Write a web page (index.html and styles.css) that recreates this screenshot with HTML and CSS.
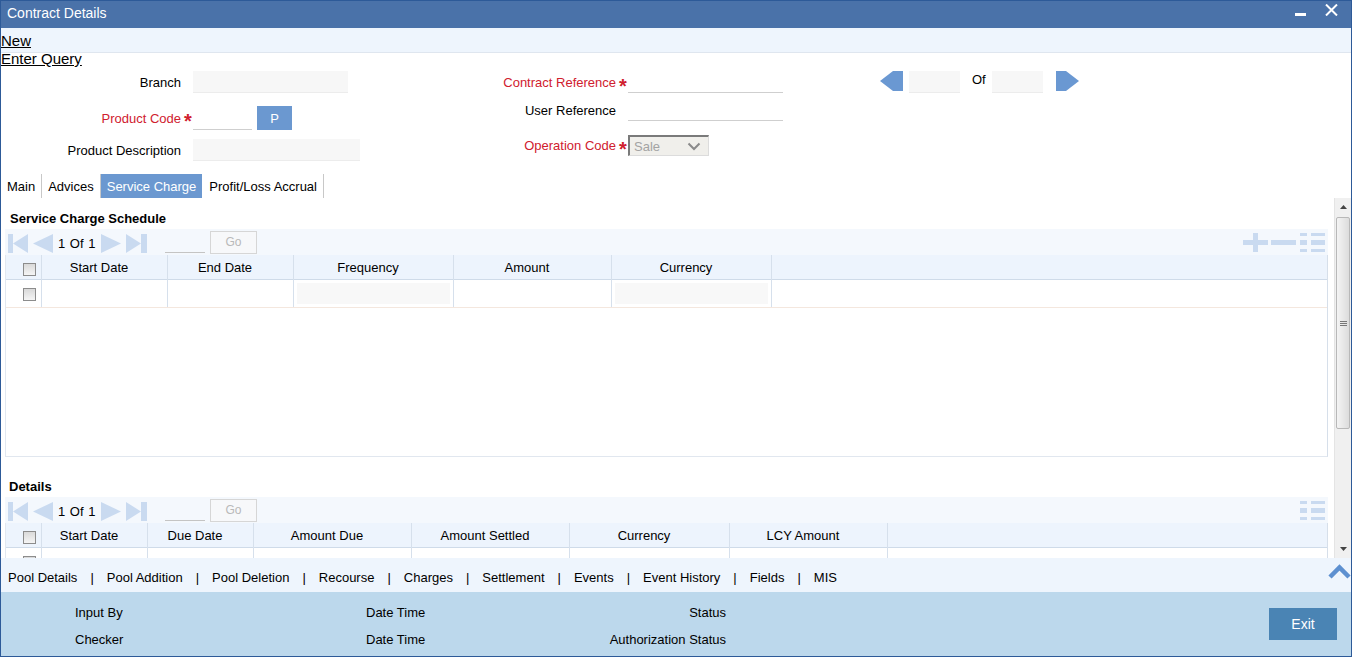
FILE: index.html
```html
<!DOCTYPE html>
<html lang="en">
<head>
<meta charset="utf-8">
<title>Contract Details</title>
<link rel="stylesheet" href="styles.css">
</head>
<body>
<div class="window">
  <header class="titlebar">
    <span class="title">Contract Details</span>
    <div class="win-ctrls">
      <svg class="ic-min" width="11" height="3" viewBox="0 0 11 3"><rect width="11" height="3" fill="#fff"/></svg>
      <svg class="ic-close" width="13" height="12" viewBox="0 0 13 12"><path d="M1 0.5 L12 11.5 M12 0.5 L1 11.5" stroke="#fff" stroke-width="2"/></svg>
    </div>
  </header>

  <nav class="actions">
    <div class="action-strip"><a href="#" class="act">New</a></div>
    <a href="#" class="act query">Enter Query</a>
  </nav>

  <section class="form">
    <div class="fcol col1">
      <div class="field">
        <label class="lbl">Branch</label><span class="req"></span>
        <span class="inp inp-fill w155"></span>
      </div>
      <div class="field h24 mt13">
        <label class="lbl mand">Product Code</label><span class="req">*</span>
        <span class="inp inp-line w59"></span>
        <button class="pbtn" type="button">P</button>
      </div>
      <div class="field mt9">
        <label class="lbl">Product Description</label><span class="req"></span>
        <span class="inp inp-fill w167"></span>
      </div>
    </div>

    <div class="fcol col2">
      <div class="field">
        <label class="lbl mand">Contract Reference</label><span class="req">*</span>
        <span class="inp inp-line w155"></span>
      </div>
      <div class="field mt6">
        <label class="lbl">User Reference</label><span class="req"></span>
        <span class="inp inp-line w155"></span>
      </div>
      <div class="field mt13">
        <label class="lbl mand">Operation Code</label><span class="req">*</span>
        <div class="select">
          <span class="sel-text">Sale</span>
          <svg width="14" height="9" viewBox="0 0 14 9"><path d="M1.5 1.5 L7 7 L12.5 1.5" fill="none" stroke="#8a8a8a" stroke-width="2"/></svg>
        </div>
      </div>
    </div>

    <div class="fcol col3">
      <div class="field recnav">
        <svg class="nav-arrow" width="23" height="20" viewBox="0 0 23 20"><polygon points="0,10 13,0 23,0 23,20 13,20" fill="#6a98d2"/></svg>
        <span class="inp inp-fill w51 navinp"></span>
        <span class="of">Of</span>
        <span class="inp inp-fill w51 navinp2"></span>
        <svg class="nav-arrow nav-next" width="23" height="20" viewBox="0 0 23 20"><polygon points="0,0 10,0 23,10 10,20 0,20" fill="#6a98d2"/></svg>
      </div>
    </div>
  </section>

  <div class="tabs">
    <span class="tab">Main</span>
    <span class="tab">Advices</span>
    <span class="tab active">Service Charge</span>
    <span class="tab">Profit/Loss Accrual</span>
  </div>

  <div class="tabbody">
    <div class="scroll-area">
      <h3 class="sec-title sec-first">Service Charge Schedule</h3>
      <div class="grid">
        <div class="g-toolbar">
          <svg class="pg" width="20" height="19" viewBox="0 0 20 19"><rect x="0" y="0" width="5" height="19" fill="#c9daf0"/><polygon points="5,9.5 20,0 20,19" fill="#c9daf0"/></svg>
          <svg class="pg" width="20" height="19" viewBox="0 0 20 19"><polygon points="0,9.5 20,0 20,19" fill="#c9daf0"/></svg>
          <span class="pg-text">1 Of 1</span>
          <svg class="pg" width="20" height="19" viewBox="0 0 20 19"><polygon points="0,0 20,9.5 0,19" fill="#c9daf0"/></svg>
          <svg class="pg" width="21" height="19" viewBox="0 0 21 19"><polygon points="0,0 15,9.5 0,19" fill="#c9daf0"/><rect x="15" y="0" width="6" height="19" fill="#c9daf0"/></svg>
          <span class="pg-inp"></span>
          <button class="go" type="button">Go</button>
          <div class="g-tools">
            <svg width="25" height="19" viewBox="0 0 25 19"><rect x="0" y="7" width="25" height="5" fill="#c9daf0"/><rect x="10" y="0" width="5" height="19" fill="#c9daf0"/></svg>
            <svg class="t-minus" width="25" height="19" viewBox="0 0 25 19"><rect x="0" y="7" width="25" height="5" fill="#c9daf0"/></svg>
            <svg class="t-list" width="25" height="19" viewBox="0 0 25 19"><rect x="0" y="0" width="7" height="3" fill="#c9daf0"/><rect x="11" y="0" width="14" height="3" fill="#c9daf0"/><rect x="0" y="7" width="7" height="5" fill="#c9daf0"/><rect x="11" y="7" width="14" height="5" fill="#c9daf0"/><rect x="0" y="16" width="7" height="3" fill="#c9daf0"/><rect x="11" y="16" width="14" height="3" fill="#c9daf0"/></svg>
          </div>
        </div>
        <div class="grid-body gb1">
          <div class="g-row g-head cols1">
            <div class="c c-cb"><span class="cb"></span></div>
            <div class="c">Start Date</div>
            <div class="c">End Date</div>
            <div class="c">Frequency</div>
            <div class="c">Amount</div>
            <div class="c">Currency</div>
            <div class="c c-last"></div>
          </div>
          <div class="g-row g-data cols1">
            <div class="c c-cb"><span class="cb"></span></div>
            <div class="c"></div>
            <div class="c"></div>
            <div class="c c-fill"><span class="cell-inp"></span></div>
            <div class="c"></div>
            <div class="c c-fill"><span class="cell-inp"></span></div>
            <div class="c c-last"></div>
          </div>
        </div>
      </div>

      <h3 class="sec-title sec-second">Details</h3>
      <div class="grid">
        <div class="g-toolbar">
          <svg class="pg" width="20" height="19" viewBox="0 0 20 19"><rect x="0" y="0" width="5" height="19" fill="#c9daf0"/><polygon points="5,9.5 20,0 20,19" fill="#c9daf0"/></svg>
          <svg class="pg" width="20" height="19" viewBox="0 0 20 19"><polygon points="0,9.5 20,0 20,19" fill="#c9daf0"/></svg>
          <span class="pg-text">1 Of 1</span>
          <svg class="pg" width="20" height="19" viewBox="0 0 20 19"><polygon points="0,0 20,9.5 0,19" fill="#c9daf0"/></svg>
          <svg class="pg" width="21" height="19" viewBox="0 0 21 19"><polygon points="0,0 15,9.5 0,19" fill="#c9daf0"/><rect x="15" y="0" width="6" height="19" fill="#c9daf0"/></svg>
          <span class="pg-inp"></span>
          <button class="go" type="button">Go</button>
          <div class="g-tools">
            <svg class="t-list" width="25" height="19" viewBox="0 0 25 19"><rect x="0" y="0" width="7" height="3" fill="#c9daf0"/><rect x="11" y="0" width="14" height="3" fill="#c9daf0"/><rect x="0" y="7" width="7" height="5" fill="#c9daf0"/><rect x="11" y="7" width="14" height="5" fill="#c9daf0"/><rect x="0" y="16" width="7" height="3" fill="#c9daf0"/><rect x="11" y="16" width="14" height="3" fill="#c9daf0"/></svg>
          </div>
        </div>
        <div class="grid-body gb2">
          <div class="g-row g-head cols2">
            <div class="c c-cb"><span class="cb"></span></div>
            <div class="c">Start Date</div>
            <div class="c">Due Date</div>
            <div class="c">Amount Due</div>
            <div class="c">Amount Settled</div>
            <div class="c">Currency</div>
            <div class="c">LCY Amount</div>
            <div class="c c-last"></div>
          </div>
          <div class="g-row g-data cols2">
            <div class="c c-cb"><span class="cb"></span></div>
            <div class="c"></div>
            <div class="c"></div>
            <div class="c"></div>
            <div class="c"></div>
            <div class="c"></div>
            <div class="c"></div>
            <div class="c c-last"></div>
          </div>
        </div>
      </div>
    </div>

    <div class="vscroll">
      <div class="sb-btn"><svg width="7" height="4" viewBox="0 0 7 4"><polygon points="0,4 3.5,0 7,4" fill="#444"/></svg></div>
      <div class="sb-thumb"><svg width="7" height="5" viewBox="0 0 7 5"><rect y="0" width="7" height="1" fill="#777"/><rect y="2" width="7" height="1" fill="#777"/><rect y="4" width="7" height="1" fill="#777"/></svg></div>
      <div class="sb-track"></div>
      <div class="sb-btn"><svg width="7" height="4" viewBox="0 0 7 4"><polygon points="0,0 7,0 3.5,4" fill="#444"/></svg></div>
    </div>
  </div>

  <div class="links">
    <a href="#">Pool Details</a><span class="sep">|</span>
    <a href="#">Pool Addition</a><span class="sep">|</span>
    <a href="#">Pool Deletion</a><span class="sep">|</span>
    <a href="#">Recourse</a><span class="sep">|</span>
    <a href="#">Charges</a><span class="sep">|</span>
    <a href="#">Settlement</a><span class="sep">|</span>
    <a href="#">Events</a><span class="sep">|</span>
    <a href="#">Event History</a><span class="sep">|</span>
    <a href="#">Fields</a><span class="sep">|</span>
    <a href="#">MIS</a>
    <svg class="caret" width="23" height="15" viewBox="0 0 23 15"><polyline points="2,13 11.5,3.5 21,13" fill="none" stroke="#5d90d0" stroke-width="4.5"/></svg>
  </div>

  <footer class="audit">
    <div class="audit-grid">
      <span>Input By</span><span>Date Time</span><span class="r">Status</span>
      <span>Checker</span><span>Date Time</span><span class="r">Authorization Status</span>
    </div>
    <button class="exit" type="button">Exit</button>
  </footer>
</div>
</body>
</html>
```

FILE: styles.css
```css
* { box-sizing: border-box; }
html, body { margin: 0; padding: 0; }
body {
  width: 1352px;
  height: 657px;
  overflow: hidden;
  background: #fff;
  color: #000;
  font-family: "Liberation Sans", Arial, sans-serif;
  font-size: 13px;
}
.window {
  width: 1352px;
  height: 657px;
  border: 1px solid #2d5a98;
  display: flex;
  flex-direction: column;
  overflow: hidden;
}

/* title bar */
.titlebar {
  flex: none;
  height: 27px;
  background: #4a72a9;
  color: #fff;
  display: flex;
  justify-content: space-between;
}
.title { font-size: 14px; line-height: 25px; padding-left: 6px; }
.win-ctrls { display: flex; align-items: flex-start; padding-right: 13px; }
.ic-min { margin-top: 12px; margin-right: 19px; }
.ic-close { margin-top: 3px; }

/* actions */
.actions { flex: none; font-size: 15px; }
.action-strip {
  height: 25px;
  background: #eef5fd;
  border-bottom: 1px solid #dfe6ef;
  padding-top: 4px;
}
.act {
  display: block;
  width: max-content;
  color: #000;
  text-decoration: underline;
  line-height: 18px;
}
.query { margin-top: -3px; }

/* form */
.form { flex: none; display: flex; padding-bottom: 13px; }
.fcol { display: flex; flex-direction: column; padding-top: 3px; }
.col1 { width: 399px; }
.col2 { width: 480px; }
.field { display: flex; align-items: center; height: 22px; }
.h24 { height: 24px; }
.mt6 { margin-top: 6px; }
.mt9 { margin-top: 9px; }
.mt13 { margin-top: 13px; }
.lbl { text-align: right; white-space: nowrap; }
.col1 .lbl { width: 180px; }
.col2 .lbl { width: 216px; }
.lbl.mand { color: #d0202e; }
.req {
  width: 12px;
  padding-left: 3px;
  align-self: flex-start;
  margin-top: 5px;
  color: #d0202e;
  font-size: 20px;
  font-weight: bold;
  line-height: 20px;
}
.inp { display: block; height: 22px; }
.inp-fill { background: #f7f7f7; border-bottom: 1px solid #ececec; }
.inp-line { background: #fff; border-bottom: 1px solid #cfcfcf; }
.w51 { width: 51px; }
.w59 { width: 59px; height: 23px; }
.w155 { width: 155px; }
.w167 { width: 167px; }
.pbtn {
  margin-left: 5px;
  width: 35px;
  height: 24px;
  border: none;
  padding: 0;
  background: #6b98d0;
  color: #fff;
  font-family: inherit;
  font-size: 13px;
}
.select {
  width: 81px;
  height: 21px;
  margin-top: 1px;
  display: flex;
  align-items: center;
  justify-content: space-between;
  padding: 0 7px 0 4px;
  background: #f0efeb;
  border-style: solid;
  border-width: 2px 1px 1px 2px;
  border-color: #7a7a7a #dcdcdc #dcdcdc #7a7a7a;
}
.sel-text { color: #a3a3a3; font-size: 13px; }

.recnav { align-items: flex-start; }
.nav-arrow { display: block; }
.navinp { margin-left: 6px; }
.of { margin-left: 12px; line-height: 18px; width: 20px; }
.navinp2 { margin-left: 0; }
.nav-next { margin-left: 13px; }

/* tabs */
.tabs { flex: none; display: flex; height: 24px; line-height: 25px; }
.tab { padding: 0 6px; border-right: 1px solid #c8c8c8; white-space: nowrap; }
.tab.active { background: #6b98d0; color: #fff; border-right-color: #fff; }

/* tab body */
.tabbody { flex: none; height: 360px; display: flex; }
.scroll-area { flex: 1; overflow: hidden; padding: 0 6px 0 4px; }
.sec-title { margin: 0; font-size: 13px; font-weight: bold; line-height: 21px; }
.sec-first { padding: 10px 0 0 5px; }
.sec-second { margin-top: 19px; padding-left: 4px; }

.g-toolbar {
  height: 26px;
  background: #f4f8fd;
  display: flex;
  align-items: center;
  padding: 0 3px;
}
.pg { display: block; margin-right: 5px; margin-top: 3px; }
.pg-text { margin-right: 5px; width: 38px; white-space: nowrap; padding-top: 2px; word-spacing: 1px; }
.pg-inp {
  width: 40px;
  height: 22px;
  margin-left: 13px;
  border-bottom: 1px solid #c4c4c4;
}
.go {
  margin-left: 5px;
  width: 47px;
  height: 23px;
  padding: 0;
  border: 1px solid #d6d6d6;
  background: #f7f8fa;
  color: #b9b9b9;
  font-family: inherit;
  font-size: 12px;
}
.g-tools { margin-left: auto; display: flex; align-items: center; }
.g-tools svg { display: block; }
.t-minus { margin-left: 3px; }
.t-list { margin-left: 4px; }
.g-tools svg:first-child { margin-left: 0; }

.grid-body { border-left: 1px solid #e1e7ef; border-right: 1px solid #d6dfea; }
.gb1 { height: 202px; border-bottom: 1px solid #e1e7ef; }
.g-row { display: grid; }
.cols1 { grid-template-columns: 36px 126px 126px 160px 158px 160px 1fr; }
.cols2 { grid-template-columns: 36px 106px 106px 158px 158px 160px 158px 1fr; }
.g-head {
  height: 25px;
  background: #edf4fd;
  border-bottom: 1px solid #cfdbe9;
}
.g-head .c { line-height: 24px; padding-top: 1px; text-align: center; padding-right: 11px; white-space: nowrap; }
.g-data { height: 28px; border-bottom: 1px solid #f4e7de; }
.c { border-right: 1px solid #d6e0ec; }
.c-last { border-right: none; }
.c-cb { padding-left: 17px; padding-right: 0 !important; text-align: left !important; display: flex; align-items: center; }
.g-head .c-cb { padding-top: 3px; }
.g-data .c-cb { padding-top: 2px; }
.cb {
  display: block;
  width: 13px;
  height: 13px;
  border: 1px solid #8c8c8c;
  background: linear-gradient(#d9d9d9, #f5f5f5);
}
.c-fill { padding: 3px 3px 3px 3px; }
.cell-inp { display: block; height: 100%; background: #f8f8f8; }

/* scrollbar */
.vscroll {
  flex: none;
  width: 17px;
  background: #f0f0f0;
  border-left: 1px solid #e4e4e4;
  display: flex;
  flex-direction: column;
}
.sb-btn { height: 18px; display: flex; align-items: center; justify-content: center; }
.sb-thumb {
  height: 212px;
  margin: 1px 1px 0 1px;
  background: linear-gradient(to right, #f4f4f4, #dcdcdc);
  border: 1px solid #b8b8b8;
  border-radius: 2px;
  display: flex;
  align-items: center;
  justify-content: center;
}
.sb-track { flex: 1; }

/* links bar */
.links {
  flex: none;
  height: 34px;
  background: #eef5fd;
  display: flex;
  align-items: center;
  padding: 4px 0 0 7px;
}
.links a { color: #000; text-decoration: none; white-space: nowrap; }
.sep { margin: 0 13px; }
.caret { margin-left: auto; align-self: flex-start; margin-top: 2px; display: block; }

/* audit footer */
.audit {
  flex: none;
  height: 64px;
  background: #bcd8ec;
  display: flex;
  align-items: flex-start;
}
.audit-grid {
  display: grid;
  grid-template-columns: 291px 160px 200px;
  grid-template-rows: 22px 22px;
  row-gap: 5px;
  line-height: 22px;
  padding: 10px 0 0 74px;
}
.audit-grid .r { text-align: right; }
.exit {
  margin: 16px 14px 0 auto;
  width: 68px;
  height: 32px;
  border: none;
  background: #4a84b4;
  color: #fff;
  font-family: inherit;
  font-size: 14px;
}
```
